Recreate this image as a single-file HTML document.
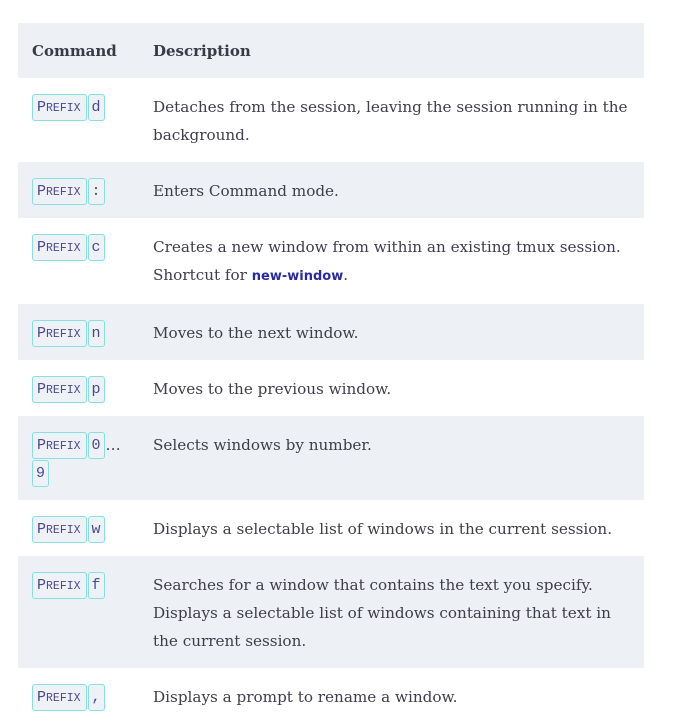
<!DOCTYPE html>
<html><head><meta charset="utf-8"><style>
body{margin:0;background:#fff;width:685px;height:721px;overflow:hidden;font-family:"DejaVu Serif","Liberation Serif",serif;color:#3e3d4a;}
table{position:absolute;left:18px;top:23px;width:626px;border-collapse:collapse;font-size:15.2px;}
th{font-weight:bold;text-align:left;height:55px;padding:0 0 0 14px;background:#edf0f5;color:#3a3946;font-size:15px;}
td{vertical-align:top;padding:15px 0 13px 14px;line-height:28px;height:28px;}
tr:nth-child(odd) td{background:#edf0f5;}
td.c{width:107px;}
td.d{padding-right:4px;letter-spacing:0px;}
kbd{display:inline-block;font-family:"Liberation Mono",monospace;font-size:15px;line-height:25px;height:25px;padding:0 3px;border:1px solid #86dfe0;border-radius:3px;background:#eef1f6;color:#4a4890;vertical-align:top;margin-top:1px;margin-right:1px;}
.p{font-size:15px;padding:0 5px 0 4px;}
.p small{font-size:11.5px;}
code{font-family:"DejaVu Sans","Liberation Sans",sans-serif;font-weight:bold;color:#2b2aa3;font-size:13px;}
</style></head><body>
<table>
<tr><th style="width:107px">Command</th><th>Description</th></tr>
<tr><td class="c"><kbd class="p">P<small>REFIX</small></kbd><kbd>d</kbd></td><td class="d">Detaches from the session, leaving the session running in the background.</td></tr>
<tr><td class="c"><kbd class="p">P<small>REFIX</small></kbd><kbd>:</kbd></td><td class="d">Enters Command mode.</td></tr>
<tr><td class="c"><kbd class="p">P<small>REFIX</small></kbd><kbd>c</kbd></td><td class="d">Creates a new window from within an existing tmux session. Shortcut for <code>new-window</code>.</td></tr>
<tr><td class="c"><kbd class="p">P<small>REFIX</small></kbd><kbd>n</kbd></td><td class="d">Moves to the next window.</td></tr>
<tr><td class="c"><kbd class="p">P<small>REFIX</small></kbd><kbd>p</kbd></td><td class="d">Moves to the previous window.</td></tr>
<tr><td class="c"><kbd class="p">P<small>REFIX</small></kbd><kbd>0</kbd>…<br><kbd>9</kbd></td><td class="d">Selects windows by number.</td></tr>
<tr><td class="c"><kbd class="p">P<small>REFIX</small></kbd><kbd>w</kbd></td><td class="d">Displays a selectable list of windows in the current session.</td></tr>
<tr><td class="c"><kbd class="p">P<small>REFIX</small></kbd><kbd>f</kbd></td><td class="d">Searches for a window that contains the text you specify. Displays a selectable list of windows containing that text in the current session.</td></tr>
<tr><td class="c"><kbd class="p">P<small>REFIX</small></kbd><kbd>,</kbd></td><td class="d">Displays a prompt to rename a window.</td></tr>
</table>
</body></html>
